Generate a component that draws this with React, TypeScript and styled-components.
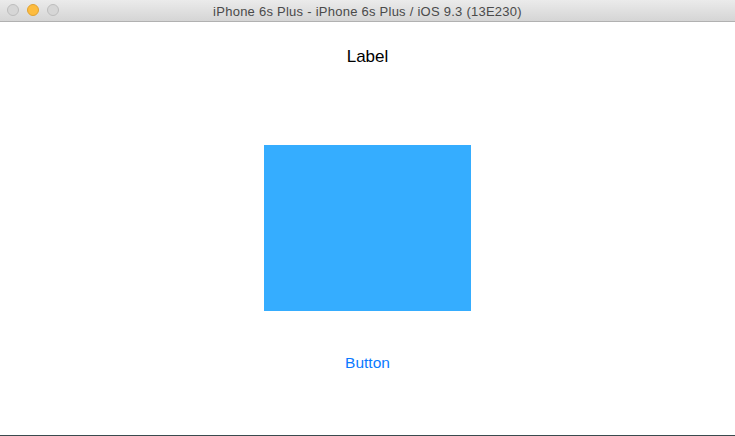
import React from "react";
import styled, { createGlobalStyle } from "styled-components";

const Global = createGlobalStyle`
  html, body { margin: 0; padding: 0; background: #ffffff; }
  body { font-family: "Liberation Sans", Arial, sans-serif; }
`;

const Window = styled.div`
  width: 735px;
  height: 436px;
  display: flex;
  flex-direction: column;
  background: #ffffff;
  box-sizing: border-box;
  border-bottom: 1px solid #3a4a4e;
  overflow: hidden;
`;

const TitleBar = styled.div`
  height: 21px;
  flex: none;
  display: flex;
  align-items: center;
  position: relative;
  background: linear-gradient(#ebebeb, #d5d5d5);
  border-bottom: 1px solid #b1b1b1;
`;

const Lights = styled.div`
  position: absolute;
  left: 7px;
  top: 4px;
  display: flex;
  gap: 8px;
`;

const Light = styled.span<{ $c: string; $b: string }>`
  width: 12px;
  height: 12px;
  border-radius: 50%;
  background: ${(p) => p.$c};
  border: 0.5px solid ${(p) => p.$b};
  box-sizing: border-box;
`;

const Title = styled.div`
  flex: 1;
  text-align: center;
  font-size: 13px;
  color: #4a4a4a;
  letter-spacing: 0.25px;
  padding-top: 1px;
`;

const Content = styled.div`
  flex: 1;
  display: flex;
  flex-direction: column;
  align-items: center;
`;

const Label = styled.div`
  margin-top: 25px;
  height: 20px;
  line-height: 20px;
  font-size: 17px;
  color: #000000;
`;

const Box = styled.div`
  margin-top: 78px;
  width: 207px;
  height: 166px;
  background: #35adff;
`;

const Button = styled.div`
  margin-top: 43px;
  height: 18px;
  line-height: 18px;
  font-size: 15.5px;
  color: #0a7aff;
`;

export default function App() {
  return (
    <>
      <Global />
      <Window>
        <TitleBar>
          <Lights>
            <Light $c="#d6d6d6" $b="#bdbdbd" />
            <Light $c="#fdbc3f" $b="#e0a231" />
            <Light $c="#d6d6d6" $b="#bdbdbd" />
          </Lights>
          <Title>iPhone 6s Plus - iPhone 6s Plus / iOS 9.3 (13E230)</Title>
        </TitleBar>
        <Content>
          <Label>Label</Label>
          <Box />
          <Button>Button</Button>
        </Content>
      </Window>
    </>
  );
}
